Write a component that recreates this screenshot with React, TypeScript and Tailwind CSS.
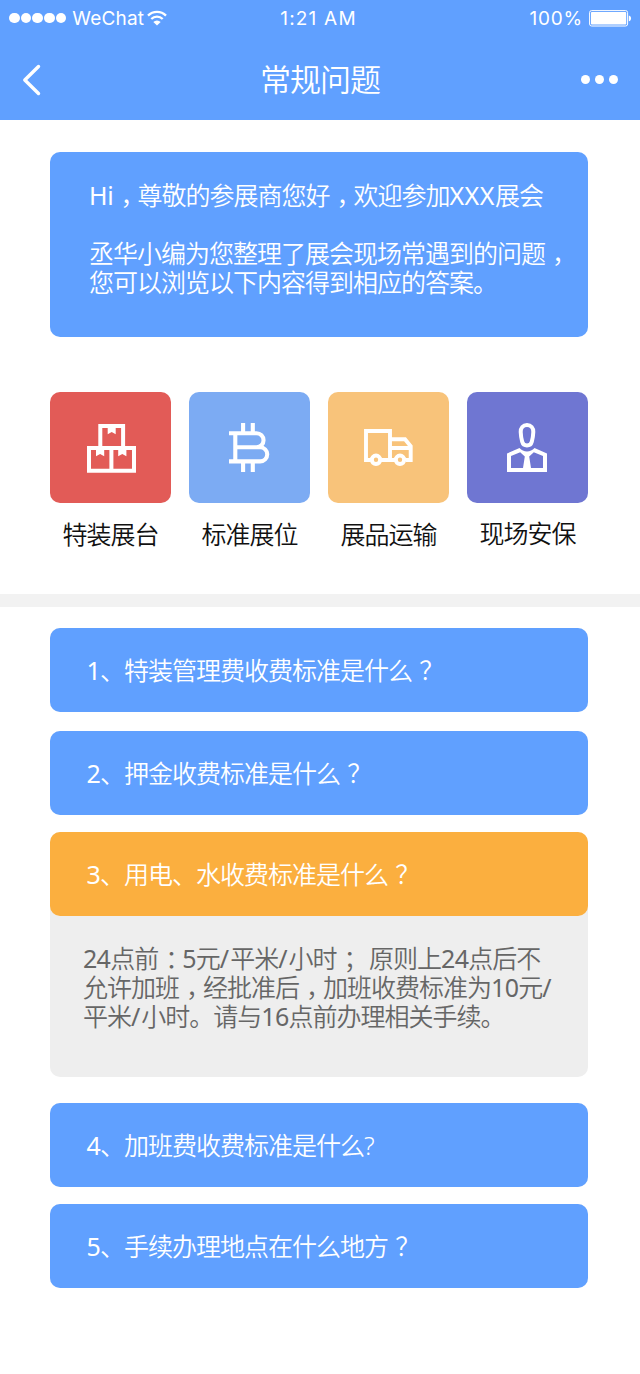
import React, { useState } from "react";
import clsx from "clsx";

type Category = {
	label: string;
	color: string;
	icon: React.ReactNode;
	labelClass?: string;
};

type Question = {
	id: number;
	title: string;
	spacing: string;
	answer?: string[];
};

const BoxesIcon = () => (
	<svg
		className="ml-px mt-px"
		width="49"
		height="49"
		viewBox="0 0 49 49"
		fill="none"
	>
		<path
			d="M13.3 24V2h22.8v22M2 24h45v22.8H2zM24.4 24v22.8"
			stroke="white"
			strokeWidth="4"
		/>
		<path
			d="M20.7 3h8v7.3l-4-2.3-4 2.3zM9 25h8.2v7.3L13.1 30 9 32.3zM31.2 25h8.2v7.3L35.3 30l-4.1 2.3z"
			fill="white"
		/>
	</svg>
);

const CoinIcon = () => (
	<svg width="41" height="49" viewBox="0 0 41 49" fill="none">
		<path
			d="M0 10.2h27.5a7.05 7.05 0 0 1 0 14.1H6.3M27.5 24.3h3.7a7.05 7.05 0 0 1 0 14.1H0M6.3 10.2v28.2M14.1 0v10M23.8 0v10M14.1 39v10M23.8 39v10"
			stroke="white"
			strokeWidth="4.1"
		/>
	</svg>
);

const TruckIcon = () => (
	<svg width="49" height="38" viewBox="0 0 49 38" fill="none">
		<path
			d="M6.5 31H2V2h24v29H17M26 10.3h15l5.7 7V31H42M31 31h-5M26 19h20"
			stroke="white"
			strokeWidth="3.9"
		/>
		<circle cx="12" cy="30.8" r="4.2" stroke="white" strokeWidth="4" />
		<circle cx="36" cy="30.8" r="4.2" stroke="white" strokeWidth="4" />
	</svg>
);

const GuardIcon = () => (
	<svg className="mr-px" width="40" height="49" viewBox="0 0 40 49" fill="none">
		<path
			d="M20 2c-4 0-6.500 3-6.300 7 .1 3 .7 6.800 1.500 9.800.7 2.600 2.300 3.700 4.800 3.700s4.100-1.100 4.800-3.700c.8-3 1.400-6.800 1.500-9.800C26.500 5 24 2 20 2z"
			stroke="white"
			strokeWidth="4"
		/>
		<path
			fillRule="evenodd"
			d="M0 30.500 12.500 25c2 2.300 4.600 3.500 7.500 3.500s5.500-1.200 7.500-3.500L40 30.500V49H0zM4 33v12h12l1.800-11.500-4.600-4.200zM36 33v12H24l-1.800-11.500 4.600-4.200z"
			fill="white"
		/>
	</svg>
);

const WifiIcon = () => (
	<svg width="20" height="16" viewBox="0 0 20 16" fill="none">
		<path
			d="M1 5.600a12.700 12.700 0 0 1 18 0M4.300 9a8.100 8.100 0 0 1 11.400 0"
			stroke="white"
			strokeWidth="2.300"
		/>
		<path d="M10 15.600 6.300 11.900a5.300 5.300 0 0 1 7.400 0z" fill="white" />
	</svg>
);

const BatteryIcon = () => (
	<svg width="43" height="17" viewBox="0 0 43 17" fill="none">
		<rect x="0.600" y="0.600" width="38" height="15.400" rx="2" stroke="white" />
		<rect x="2" y="2" width="35.200" height="12.600" rx="0.800" fill="white" />
		<path d="M39.800 5.400c3 .7 3 5.100 0 5.800z" fill="white" />
	</svg>
);

const categories: Category[] = [
	{ label: "特装展台", color: "bg-[#e25b57]", icon: <BoxesIcon /> },
	{ label: "标准展位", color: "bg-[#7cabf3]", icon: <CoinIcon /> },
	{ label: "展品运输", color: "bg-[#f8c37a]", icon: <TruckIcon /> },
	{
		label: "现场安保",
		color: "bg-[#6f76d2]",
		icon: <GuardIcon />,
		labelClass: "-mt-px",
	},
];

const questions: Question[] = [
	{ id: 1, title: "特装管理费收费标准是什么？", spacing: "" },
	{ id: 2, title: "押金收费标准是什么？", spacing: "mt-[19px]" },
	{
		id: 3,
		title: "用电、水收费标准是什么？",
		spacing: "mt-[17px]",
		answer: [
			"24点前：5元/平米/小时； 原则上24点后不",
			"允许加班，经批准后，加班收费标准为10元/",
			"平米/小时。请与16点前办理相关手续。",
		],
	},
	{ id: 4, title: "加班费收费标准是什么?", spacing: "mt-[26px]" },
	{ id: 5, title: "手续办理地点在什么地方？", spacing: "mt-[17px]" },
];

const getPartClass = (part: string) => {
	// half-width marks, centred in a full-width cell
	if (/^[，；：？]$/.test(part))
		return "ml-[7px] mr-[5.500px] [font-feature-settings:'halt']";
	if (/^\d+$/.test(part)) return "font-normal tracking-[-0.700px]";
	if (part === "/") return "font-normal tracking-[1px]";
	if (part === "Hi") return "font-normal tracking-[-0.300px]";
	if (part === "XXX") return "font-normal tracking-[0.500px]";
	return "";
};

const Copy = ({ text }: { text: string }) => (
	<>
		{text.split(/([，；：？]|\d+|\/|[A-Za-z]+)/).map((part, i) => {
			const partClass = getPartClass(part);
			return partClass ? (
				<span key={i} className={partClass}>
					{part}
				</span>
			) : (
				part
			);
		})}
	</>
);

const StatusBar = () => (
	<div className="grid h-10 grid-cols-3 items-center pb-1 pl-[9px] pr-[8px] font-['Inter',sans-serif] text-[19px] font-normal leading-none tracking-normal">
		<div className="flex items-center">
			<div className="flex gap-[1.200px]">
				{[0, 1, 2, 3, 4].map((dot) => (
					<span key={dot} className="size-[10.500px] rounded-full bg-white" />
				))}
			</div>
			<span className="ml-[6px] mr-[3px] tracking-[0.200px]">WeChat</span>
			<WifiIcon />
		</div>
		<span className="-ml-[4px] text-center tracking-[1.200px]">1:21 AM</span>
		<div className="flex items-center justify-end gap-[6px]">
			<span className="tracking-[0.800px]">100%</span>
			<BatteryIcon />
		</div>
	</div>
);

const Header = () => (
	<header className="h-[120px] bg-[#60a0ff] text-white">
		<StatusBar />
		<div className="grid h-20 grid-cols-3 items-center px-[22px]">
			<button className="w-5">
				<svg width="20" height="32" viewBox="0 0 20 32" fill="none">
					<path
						d="M16.500 2.500 2.800 16l13.700 13.500"
						stroke="white"
						strokeWidth="3.400"
						strokeLinecap="round"
						strokeLinejoin="round"
					/>
				</svg>
			</button>
			<h1 className="pb-[2px] text-center text-[31px] tracking-[-1px]">
				常规问题
			</h1>
			<button className="flex justify-end gap-[5px] pb-px">
				{[0, 1, 2].map((dot) => (
					<span key={dot} className="size-[9px] rounded-full bg-white" />
				))}
			</button>
		</div>
	</header>
);

const App = () => {
	const [openId, setOpenId] = useState<number | null>(3);

	return (
		<div className="min-h-[1374px] w-[640px] bg-white font-['Noto_Sans','Noto_Sans_CJK_SC',sans-serif] text-[25px] font-[350] tracking-[-1px]">
			<Header />

			<section className="ml-[50px] mt-8 h-[185px] w-[538px] rounded-[10px] bg-[#60a0ff] pl-[39px] pt-[29px] leading-[29px] whitespace-nowrap text-white">
				<p>
					<Copy text="Hi，尊敬的参展商您好，欢迎参加XXX展会" />
				</p>
				<p className="mt-[29px]">
					<Copy text="丞华小编为您整理了展会现场常遇到的问题，" />
				</p>
				<p>您可以浏览以下内容得到相应的答案。</p>
			</section>

			<nav className="ml-[50px] mt-[55px] grid h-[202px] w-[538px] grid-cols-4 gap-[18px]">
				{categories.map((item) => (
					<div key={item.label} className="flex flex-col items-center">
						<div
							className={clsx(
								"flex h-[111px] w-full items-center justify-center rounded-[10px]",
								item.color
							)}
						>
							{item.icon}
						</div>
						<div className={clsx("pt-[13px] leading-9 text-[#111]", item.labelClass)}>
							{item.label}
						</div>
					</div>
				))}
			</nav>

			<div className="h-[13px] bg-[#f2f2f2]" />

			<main className="ml-[50px] mt-[21px] w-[538px]">
				{questions.map((q) => {
					const isOpen = openId === q.id && !!q.answer;
					return (
						<div
							key={q.id}
							className={clsx("rounded-[10px] bg-[#eee]", q.spacing)}
						>
							<button
								onClick={() => setOpenId(isOpen ? null : q.id)}
								className={clsx(
									"flex h-[84px] w-full items-center rounded-[10px] pl-[36.500px] pt-px text-left text-white",
									isOpen ? "bg-[#fbaf3f]" : "bg-[#60a0ff]"
								)}
							>
								<span>
									<Copy text={`${q.id}、${q.title}`} />
								</span>
							</button>
							{isOpen && (
								<div className="h-[161px] pl-[33px] pt-7 leading-[29px] whitespace-nowrap text-[#666] [word-spacing:3px]">
									{q.answer?.map((line) => (
										<p key={line}>
											<Copy text={line} />
										</p>
									))}
								</div>
							)}
						</div>
					);
				})}
			</main>
		</div>
	);
};

export default App;
